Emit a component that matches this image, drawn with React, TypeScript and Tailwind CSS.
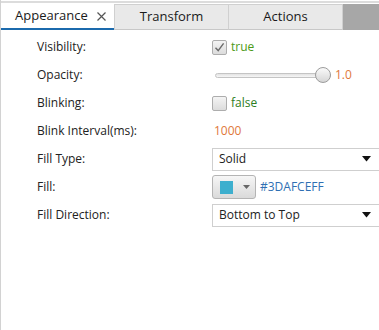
import React from "react";

function Check({ checked }: { checked: boolean }) {
  return (
    <div className="w-[15px] h-[15px] rounded-[2px] border border-[#adadad] bg-gradient-to-b from-[#f4f4f4] to-[#dcdcdc] flex items-center justify-center">
      {checked && (
        <svg width="11" height="11" viewBox="0 0 11 11">
          <path d="M1.5 5.8 L4.2 8.6 L9.6 1.4" fill="none" stroke="#6a6a6a" strokeWidth="1.4" />
        </svg>
      )}
    </div>
  );
}

function Select({ value }: { value: string }) {
  return (
    <div className="h-[23px] w-[175px] shrink-0 border border-[#cfcfcf] bg-white flex items-center justify-between pl-[6px] pr-[15px] text-[#222]">
      <span>{value}</span>
      <svg width="9" height="6" viewBox="0 0 9 6">
        <path d="M0 0 H9 L4.5 5.5 Z" fill="#111" />
      </svg>
    </div>
  );
}

export default function App() {
  const rows: { label: string; value: React.ReactNode }[] = [
    {
      label: "Visibility:",
      value: (
        <div className="flex items-center gap-[4px]">
          <Check checked />
          <span className="text-[#4c9a16]">true</span>
        </div>
      ),
    },
    {
      label: "Opacity:",
      value: (
        <div className="flex items-center pl-[3px]">
          <div className="relative w-[116px] h-[16px] flex items-center">
            <div className="w-full h-[5px] rounded-full border border-[#c4c4c4] bg-gradient-to-b from-[#e2e2e2] to-[#f6f6f6]" />
            <div className="absolute right-0 top-0 w-[16px] h-[16px] rounded-full border border-[#9c9c9c] bg-gradient-to-b from-[#fafafa] to-[#d6d6d6]" />
          </div>
          <span className="ml-[4px] text-[#e0783a]">1.0</span>
        </div>
      ),
    },
    {
      label: "Blinking:",
      value: (
        <div className="flex items-center gap-[4px]">
          <Check checked={false} />
          <span className="text-[#2e7d22]">false</span>
        </div>
      ),
    },
    {
      label: "Blink Interval(ms):",
      value: <span className="pl-[2px] text-[#e0783a]">1000</span>,
    },
    { label: "Fill Type:", value: <Select value="Solid" /> },
    {
      label: "Fill:",
      value: (
        <div className="flex items-center gap-[4px]">
          <div className="w-[44px] h-[24px] rounded-[3px] border border-[#b4b4b4] bg-gradient-to-b from-[#f6f6f6] to-[#dadada] flex items-center pl-[7px] gap-[10px]">
            <div className="w-[13px] h-[13px] bg-[#3dafce]" />
            <svg width="7" height="4" viewBox="0 0 7 4">
              <path d="M0 0 H7 L3.5 4 Z" fill="#666" />
            </svg>
          </div>
          <span className="text-[#2f6fb3]">#3DAFCEFF</span>
        </div>
      ),
    },
    { label: "Fill Direction:", value: <Select value="Bottom to Top" /> },
  ];

  return (
    <div
      className="w-[379px] h-[330px] bg-white overflow-hidden text-[12px] text-[#222] border-l border-[#d2d2d2]"
      style={{ fontFamily: '"Open Sans", "Noto Sans", sans-serif' }}
    >
      <div className="pt-[1px] h-[30px]">
        <div className="h-[2px] bg-[#dcdcdc]" />
        <div className="flex h-[27px] pt-[1px]">
          <div className="w-[113px] bg-white border-b-2 border-[#1b6aad] flex items-center pl-[14px] gap-[9px] text-[13px] text-[#1a1a1a]">
            <span>Appearance</span>
            <svg width="9" height="9" viewBox="0 0 9 9">
              <path d="M0.5 0.5 L8.5 8.5 M8.5 0.5 L0.5 8.5" stroke="#555" strokeWidth="1.2" />
            </svg>
          </div>
          <div className="w-[115px] bg-[#e9e9e9] border border-[#d0d0d0] border-b-[#c8c8c8] flex items-center justify-center text-[13px] text-[#1a1a1a]">
            Transform
          </div>
          <div className="w-[114px] bg-[#e9e9e9] border border-l-0 border-[#d0d0d0] border-b-[#c8c8c8] flex items-center justify-center text-[13px] text-[#1a1a1a]">
            Actions
          </div>
          <div className="flex-1 bg-[#a7a7a7]" />
        </div>
      </div>
      <div className="pt-[3px] flex flex-col">
        {rows.map((r) => (
          <div key={r.label} className="flex items-center h-[28px]">
            <div className="w-[211px] shrink-0 pl-[36px] text-[#222]">{r.label}</div>
            <div className="flex-1 min-w-0 flex items-center">{r.value}</div>
          </div>
        ))}
      </div>
    </div>
  );
}
